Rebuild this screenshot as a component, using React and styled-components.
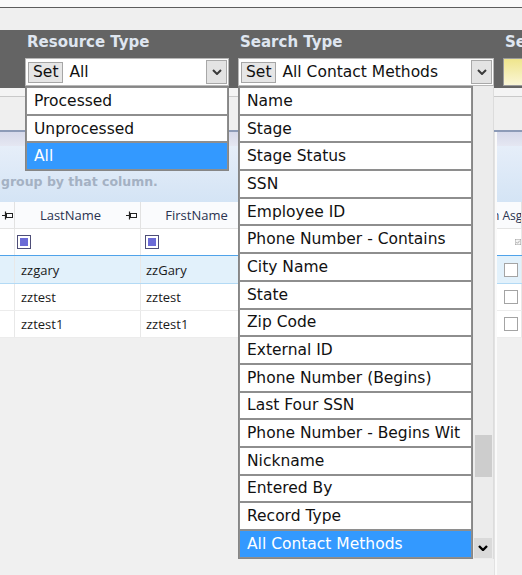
import React from 'react';
import styled, { createGlobalStyle } from 'styled-components';

const GlobalStyle = createGlobalStyle`
  html, body {
    margin: 0;
    padding: 0;
    background: #f0f0f0;
  }
  * {
    box-sizing: border-box;
  }
`;

const resourceTypes = ['Processed', 'Unprocessed', 'All'];

const searchTypes = [
  'Name',
  'Stage',
  'Stage Status',
  'SSN',
  'Employee ID',
  'Phone Number - Contains',
  'City Name',
  'State',
  'Zip Code',
  'External ID',
  'Phone Number (Begins)',
  'Last Four SSN',
  'Phone Number - Begins Wit',
  'Nickname',
  'Entered By',
  'Record Type',
  'All Contact Methods',
];

const people = [
  { last: 'zzgary', first: 'zzGary', selected: true },
  { last: 'zztest', first: 'zztest' },
  { last: 'zztest1', first: 'zztest1' },
];

const Chevron = ({ color = '#3a3a3a', width = 2 }) => (
  <svg width="10" height="6" viewBox="0 0 10 6">
    <path d="M1 1l4 4 4-4" stroke={color} strokeWidth={width} fill="none" />
  </svg>
);

const PinIcon = () => (
  <svg width="11" height="9" viewBox="0 0 11 9">
    <path d="M0 4.5H3.5M3.5 0.5V8.5" stroke="#222" strokeWidth="1.2" fill="none" />
    <rect x="4.5" y="2.5" width="6" height="4" fill="none" stroke="#222" strokeWidth="1" />
  </svg>
);

const FilterBox = () => (
  <svg width="14" height="14" viewBox="0 0 14 14">
    <rect x="0.5" y="0.5" width="13" height="13" fill="#fff" stroke="#4e4e78" />
    <rect x="3" y="3" width="8" height="8" fill="#6b6bd6" />
  </svg>
);

const CheckedBox = () => (
  <svg width="14" height="14" viewBox="0 0 14 14">
    <rect x="0.5" y="0.5" width="13" height="13" fill="#f4f4f4" stroke="#8e8e8e" />
    <path d="M3 7l3 3 5-6" stroke="#8e8e8e" strokeWidth="1.6" fill="none" />
  </svg>
);

const EmptyBox = () => (
  <svg width="14" height="14" viewBox="0 0 14 14">
    <rect x="0.5" y="0.5" width="13" height="13" fill="#fff" stroke="#a4a4a4" />
  </svg>
);

const Combo = ({ value, items, selected, scroll }) => (
  <ComboBox>
    <SetButton>Set</SetButton>
    <ComboValue>{value}</ComboValue>
    <ArrowButton>
      <Chevron />
    </ArrowButton>
    <DropList>
      <ItemColumn>
        {items.map((item) => (
          <ListItem key={item} $active={item === selected}>
            {item}
          </ListItem>
        ))}
      </ItemColumn>
      {scroll && (
        <Scrollbar>
          <Thumb />
          <ScrollArrow>
            <Chevron color="#000" width={2.4} />
          </ScrollArrow>
        </Scrollbar>
      )}
    </DropList>
  </ComboBox>
);

const App = () => {
  return (
    <Page>
      <GlobalStyle />
      <TopStrip />
      <TitleGap />
      <FilterBand>
        <FilterGroup $width={204}>
          <FilterLabel>Resource Type</FilterLabel>
          <Combo value='All' items={resourceTypes} selected='All' />
        </FilterGroup>
        <FilterGroup $width={256}>
          <FilterLabel>Search Type</FilterLabel>
          <Combo value='All Contact Methods' items={searchTypes} selected='All Contact Methods' scroll />
        </FilterGroup>
        <FilterGroup $width={200}>
          <FilterLabel>Search Text</FilterLabel>
          <YellowField />
        </FilterGroup>
      </FilterBand>
      <Toolbar />
      <GridArea>
        <Panel $width='494px'>
          <PanelCaption />
          <GroupPanel>
            <GroupHint>group by that column.</GroupHint>
          </GroupPanel>
          <GridRow $cols='15px 126px 126px 1fr' $kind='header'>
            <HeaderCell $center>
              <PinIcon />
            </HeaderCell>
            <HeaderCell>
              <HeaderText>LastName</HeaderText>
              <PinIcon />
            </HeaderCell>
            <HeaderCell>
              <HeaderText>FirstName</HeaderText>
              <PinIcon />
            </HeaderCell>
            <HeaderCell />
          </GridRow>
          <GridRow $cols='15px 126px 126px 1fr' $kind='filter'>
            <Cell />
            <Cell $pad={2}><FilterBox /></Cell>
            <Cell $pad={4}><FilterBox /></Cell>
            <Cell />
          </GridRow>
          {people.map((p) => (
            <GridRow key={p.last} $cols='15px 126px 126px 1fr' $kind={p.selected ? 'selected' : 'row'}>
              <Cell />
              <Cell $pad={6}>{p.last}</Cell>
              <Cell $pad={5}>{p.first}</Cell>
              <Cell />
            </GridRow>
          ))}
        </Panel>
        <Splitter />
        <Panel $width='auto'>
          <PanelCaption />
          <GroupPanel />
          <GridRow $cols='1fr' $kind='header'>
            <HeaderCell $left>
              <HeaderText $left>n Asg</HeaderText>
            </HeaderCell>
          </GridRow>
          <GridRow $cols='1fr' $kind='filter'>
            <Cell $pad={18}><CheckedBox /></Cell>
          </GridRow>
          {people.map((p) => (
            <GridRow key={p.last} $cols='1fr' $kind={p.selected ? 'selected' : 'row'}>
              <Cell $pad={7}><EmptyBox /></Cell>
            </GridRow>
          ))}
        </Panel>
      </GridArea>
    </Page>
  );
};

const Page = styled.div`
  width: 522px;
  height: 575px;
  overflow: hidden;
  background: #f0f0f0;
  font-family: 'DejaVu Sans', Verdana, sans-serif;
`;

const TopStrip = styled.div`
  height: 8px;
  background: #f9f9f9;
  border-bottom: 1px solid #5c5c5c;
`;

const TitleGap = styled.div`
  height: 22px;
  background: #efefef;
`;

const FilterBand = styled.div`
  height: 58px;
  background: #646464;
  display: flex;
  gap: 9px;
  padding: 3px 0 0 25px;
`;

const FilterGroup = styled.div`
  flex: 0 0 ${({ $width }) => $width}px;
  display: flex;
  flex-direction: column;
`;

const FilterLabel = styled.div`
  height: 18px;
  line-height: 18px;
  margin: 0 0 7px 2px;
  font-size: 15px;
  font-weight: bold;
  color: #dfe6f0;
  white-space: nowrap;
`;

const ComboBox = styled.div`
  position: relative;
  height: 28px;
  display: flex;
  align-items: center;
  padding: 0 1px 0 2px;
  background: #fff;
  border: 1px solid #b8b8b8;
`;

const SetButton = styled.div`
  height: 21px;
  padding: 0 4px;
  display: flex;
  align-items: center;
  background: #e6e6e6;
  border: 1px solid #a6a6a6;
  font-size: 15.5px;
  color: #111;
`;

const ComboValue = styled.div`
  flex: 1;
  margin-left: 6px;
  font-size: 15.5px;
  color: #111;
  white-space: nowrap;
  overflow: hidden;
`;

const ArrowButton = styled.div`
  width: 21px;
  height: 24px;
  display: flex;
  align-items: center;
  justify-content: center;
  background: #e3e3e3;
  border: 1px solid #a8a8a8;
`;

const DropList = styled.div`
  position: absolute;
  top: 27px;
  left: -1px;
  right: -1px;
  display: flex;
  z-index: 10;
`;

const ItemColumn = styled.div`
  flex: 1;
  border: 1px solid #868686;
  background: #fff;
`;

const ListItem = styled.div`
  height: 27.7px;
  display: flex;
  align-items: center;
  padding-left: 7px;
  border: 1px solid #8e8e8e;
  font-size: 15.5px;
  white-space: nowrap;
  overflow: hidden;
  color: ${({ $active }) => ($active ? '#fff' : '#111')};
  background: ${({ $active }) => ($active ? '#3399ff' : '#fff')};
`;

const Scrollbar = styled.div`
  width: 21px;
  display: flex;
  flex-direction: column;
  align-items: center;
  background: #ececec;
  border-right: 1px solid #dcdcdc;
`;

const Thumb = styled.div`
  width: 17px;
  height: 42px;
  margin-top: 349px;
  background: #cdcdcd;
`;

const ScrollArrow = styled.div`
  width: 18px;
  height: 20px;
  margin-top: auto;
  margin-bottom: 1px;
  display: flex;
  align-items: center;
  justify-content: center;
  background: #dadada;
`;

const YellowField = styled.div`
  height: 28px;
  border: 1px solid #9c9c9c;
  background: linear-gradient(to bottom, #efe58c, #faf6d6);
`;

const Toolbar = styled.div`
  height: 44px;
  background: linear-gradient(to bottom, #f4f4f4 0, #f4f4f4 8px, #c9c9c9 8px, #c9c9c9 9px, #efefef 9px);
  border-bottom: 2px solid #8d9bb7;
`;

const GridArea = styled.div`
  display: flex;
`;

const Panel = styled.div`
  flex: ${({ $width }) => ($width === 'auto' ? '1' : `0 0 ${$width}`)};
  overflow: hidden;
  font-family: 'Open Sans', 'Noto Sans', sans-serif;
`;

const Splitter = styled.div`
  flex: 0 0 3px;
  height: 445px;
  background: #fafafa;
  border-left: 1px solid #e2e2e2;
`;

const PanelCaption = styled.div`
  height: 14px;
  background: linear-gradient(to bottom, #d6d9ea, #e5e7f2);
`;

const GroupPanel = styled.div`
  height: 56px;
  padding-top: 28px;
  background: linear-gradient(to bottom, #e6eef9, #d4e4f5);
`;

const GroupHint = styled.div`
  padding-left: 1px;
  font-family: 'DejaVu Sans', Verdana, sans-serif;
  font-size: 12.5px;
  font-weight: bold;
  line-height: 15px;
  color: #a4b1c3;
  white-space: nowrap;
`;

const rowStyles = {
  header: 'height: 27px; background: #fafbfd; border-bottom: 1px solid #e4e4e4;',
  filter: 'height: 27px; background: #fff; border-bottom: 1px solid #4fa3ea;',
  selected: 'height: 28px; background: #e2f1fb; border-bottom: 1px solid #b3daf5;',
  row: 'height: 27px; background: #fff; border-bottom: 1px solid #ececec;',
};

const GridRow = styled.div`
  display: grid;
  grid-template-columns: ${({ $cols }) => $cols};
  ${({ $kind }) => rowStyles[$kind]}
`;

const HeaderCell = styled.div`
  display: flex;
  align-items: center;
  justify-content: ${({ $center }) => ($center ? 'center' : 'flex-start')};
  padding-right: ${({ $center, $left }) => ($center || $left ? '0' : '3px')};
  border-right: 1px solid #e2e2e2;
  overflow: hidden;
`;

const HeaderText = styled.span`
  flex: 1;
  text-align: ${({ $left }) => ($left ? 'left' : 'center')};
  margin-left: ${({ $left }) => ($left ? '-5px' : '0')};
  font-size: ${({ $left }) => ($left ? '12px' : '13px')};
  color: #2b3350;
  white-space: nowrap;
`;

const Cell = styled.div`
  display: flex;
  align-items: center;
  padding-left: ${({ $pad = 0 }) => $pad}px;
  border-right: 1px solid #e8e8e8;
  font-size: 13px;
  color: #1a1a1a;
  white-space: nowrap;
  overflow: hidden;
`;

export default App;
